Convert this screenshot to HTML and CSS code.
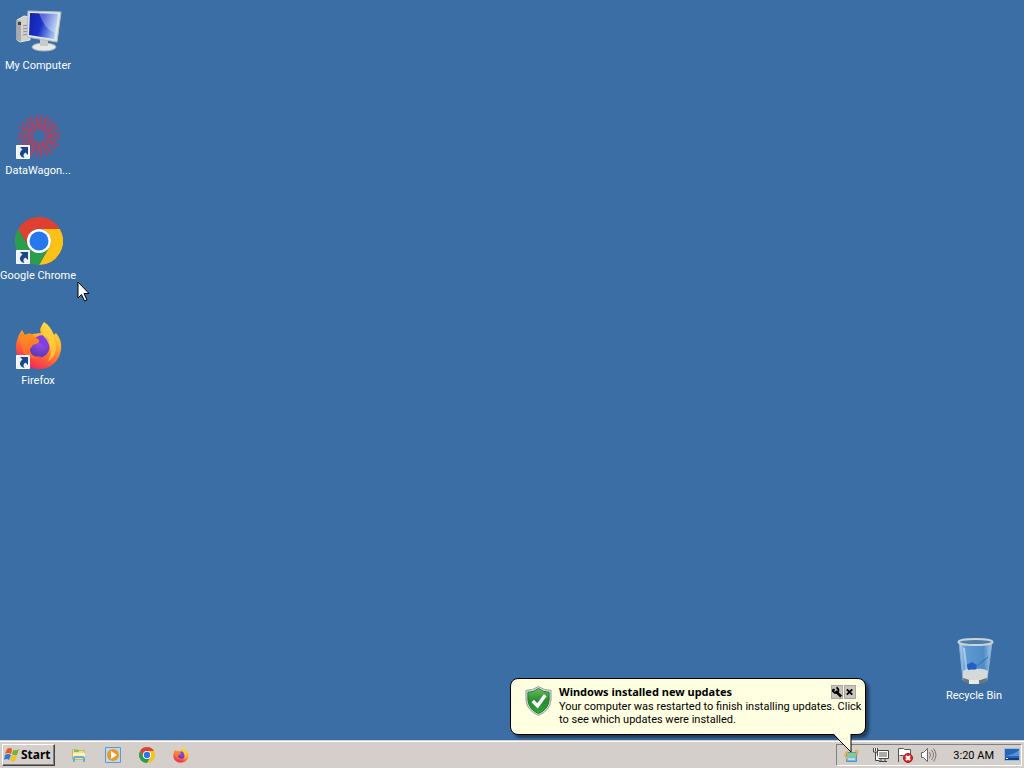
FILE: index.html
```html
<!DOCTYPE html>
<html lang="en">
<head>
<meta charset="utf-8">
<title>Desktop</title>
<link rel="stylesheet" href="styles.css">
</head>
<body>
<svg class="defs" aria-hidden="true">
  <defs>
    <linearGradient id="screen" x1="0" y1="0" x2="1" y2="0.3"><stop offset="0" stop-color="#1020a8"/><stop offset=".5" stop-color="#1a30c8"/><stop offset="1" stop-color="#9fc0f0"/></linearGradient>
    <linearGradient id="orange" x1=".8" y1="0" x2=".3" y2="1"><stop offset="0" stop-color="#ffe94a"/><stop offset=".35" stop-color="#ffb02c"/><stop offset=".65" stop-color="#ff6a35"/><stop offset="1" stop-color="#f02060"/></linearGradient>
    <linearGradient id="ear" x1="0" y1="0" x2="0" y2="1"><stop offset="0" stop-color="#ff9a1f"/><stop offset="1" stop-color="#ff6030"/></linearGradient>
    <radialGradient id="globe" cx=".6" cy=".25" r=".8"><stop offset="0" stop-color="#a050f0"/><stop offset="1" stop-color="#5535b5"/></radialGradient>
    <linearGradient id="shieldGreen" x1="0" y1="0" x2="0" y2="1"><stop offset="0" stop-color="#6dbb62"/><stop offset=".5" stop-color="#238e2d"/><stop offset="1" stop-color="#35a43a"/></linearGradient>
    <linearGradient id="glass" x1="0" y1="0" x2="1" y2="0"><stop offset="0" stop-color="#b9d7ef"/><stop offset=".2" stop-color="#5f9bd2"/><stop offset=".75" stop-color="#4d8cc8"/><stop offset="1" stop-color="#a9cbe8"/></linearGradient>
    <symbol id="shortcut" viewBox="0 0 14 14"><path fill="#eaf3fc" stroke="#fff" d="M.5.5h13v13H.5z"/><path fill="#1b4587" d="M4 2h8v8L9.500 7.500C7 9 7 11 8.500 13 4 12 2 8 6.500 4.500z"/></symbol>
    <symbol id="chrome" viewBox="0 0 48 48">
      <path fill="#e0402f" d="M3.200 12A24 24 0 0 1 44.800 12H24A12 12 0 0 0 13.600 30z"/>
      <path fill="#fbc116" d="M44.800 12A24 24 0 0 1 24 48L34.400 30A12 12 0 0 0 24 12z"/>
      <path fill="#2b9e4b" d="M24 48A24 24 0 0 1 3.200 12L13.600 30A12 12 0 0 0 34.400 30z"/>
      <circle cx="24" cy="24" r="12" fill="#fff"/><circle cx="24" cy="24" r="9.500" fill="#2878ed"/>
    </symbol>
    <symbol id="firefox" viewBox="0 0 48 48">
      <path fill="url(#orange)" d="M29 0C34 3 37 8 39 13L41 11C45 16 47 21 46 28 44 40 35 47 24 47 11 47 1 38 1 26 1 19 3 15 5 11L7 8 9 13 26 11C24 8 26 4 29 0z"/>
      <circle cx="24" cy="25" r="10.500" fill="url(#globe)"/>
      <path fill="#813ee0" d="M21 17C23 12 30 12 34 18L33 25 27 23z"/>
      <path fill="url(#ear)" d="M7 8L10 13C14 11 17 11 19 14L24 18C25 21 21 22 18 23L15 27C15 33 20 36 26 34 22 39 11 36 8 29 5 22 5 15 7 8z"/>
      <path fill="#ffd23f" opacity=".75" d="M29 1C36 9 42 17 41 27 40 33 37 37 33 39 38 31 36 25 31 17 27 14 26 6 29 1z"/>
    </symbol>
    <g id="ray" fill="none" stroke="#b5405f" stroke-width="1.200"><path d="M24 18V11L21 8 23 5 21 2M24 11L27 8 25 5 28 3M21 15L17 12M27 15L29 11M22 18L26 14 23 11M20 6l4 3"/></g>
  </defs>
</svg>

<main class="desktop">
  <nav class="shortcuts" aria-label="Desktop icons">
    <a class="shortcut" href="#">
      <svg viewBox="0 0 48 48" aria-hidden="true">
        <path fill="#d3d3cf" stroke="#e5e5df" d="M2 13L9 9 15 10V33L5 35 2 33z"/><path fill="#a9aba8" d="M2 13l4 1v21l-4-2z"/><path fill="#444" d="M3 15h3v3H3z"/><path stroke="#888" d="M8 19l5-1M8 22l5-1M8 25l5-1M8 28l5-1"/>
        <ellipse cx="29" cy="40" rx="12" ry="4" fill="#e6e9e8" stroke="#a9b3b5"/><path fill="#c4cccd" d="M25 31h8v8h-8z"/>
        <path fill="#dfe4e6" stroke="#b3bdc6" d="M13 4L46 5 42 35 12 30z"/><path fill="url(#screen)" d="M15 6L43 7 39 32 14 28z"/><path fill="#fff" opacity=".3" d="M24 6L43 7 40 26Q29 22 24 6z"/>
      </svg><span>My Computer</span>
    </a>
    <a class="shortcut" href="#">
      <svg viewBox="0 0 48 48" aria-hidden="true">
        <use href="#ray"/><use href="#ray" transform="rotate(30 24 24)"/><use href="#ray" transform="rotate(60 24 24)"/><use href="#ray" transform="rotate(90 24 24)"/><use href="#ray" transform="rotate(120 24 24)"/><use href="#ray" transform="rotate(150 24 24)"/><use href="#ray" transform="rotate(180 24 24)"/><use href="#ray" transform="rotate(210 24 24)"/><use href="#ray" transform="rotate(240 24 24)"/><use href="#ray" transform="rotate(270 24 24)"/><use href="#ray" transform="rotate(300 24 24)"/><use href="#ray" transform="rotate(330 24 24)"/>
        <use href="#shortcut" x="1" y="33" width="14" height="14"/>
      </svg><span>DataWagon...</span>
    </a>
    <a class="shortcut" href="#">
      <svg viewBox="0 0 48 48" aria-hidden="true"><use href="#chrome" width="48" height="48"/><use href="#shortcut" x="1" y="33" width="14" height="14"/></svg><span>Google Chrome</span>
    </a>
    <a class="shortcut" href="#">
      <svg viewBox="0 0 48 48" aria-hidden="true"><use href="#firefox" width="48" height="48"/><use href="#shortcut" x="1" y="33" width="14" height="14"/></svg><span>Firefox</span>
    </a>
  </nav>
  <a class="shortcut recycle" href="#">
    <svg viewBox="0 0 48 48" aria-hidden="true">
      <path fill="url(#glass)" stroke="#87afd1" d="M8 5L12 43Q25 49 36 43L41 5z"/>
      <path fill="#d5d9d8" d="M12 34Q18 29 23 33 30 30 37 34L36 41Q24 46 12 41z"/><path fill="#68777c" d="M12 41Q24 46 36 41L35 45Q24 50 13 45z"/><path fill="#e7ece8" d="M18 43h10v4H18z"/>
      <path fill="#245fc4" d="M15 28l6-3 5 3-1 4-8 1z"/><path fill="none" stroke="#2d6daf" stroke-width="1" d="M27 28l10-8"/><path stroke="#c1dcf2" stroke-width="2" opacity=".7" d="M13 11l3 26"/>
      <ellipse cx="24.500" cy="5" rx="17" ry="3" fill="#527da4" stroke="#cbd4da" stroke-width="2"/>
    </svg><span>Recycle Bin</span>
  </a>
  <svg class="pointer" viewBox="0 0 13 21" aria-hidden="true"><path fill="#fff" stroke="#000" d="M1 1V17L4.500 13.500 7.500 20 10 19 7 12.500H12z"/></svg>
</main>

<section class="balloon" role="status">
  <svg class="shield" viewBox="0 0 28 32" aria-hidden="true"><path fill="#d4ddd6" stroke="#8aa092" d="M14 1Q20 5 27 5V15Q26 26 14 31 2 26 1 15V5Q8 5 14 1z"/><path fill="url(#shieldGreen)" stroke="#25752d" d="M14 3Q19 7 25 7V15Q24 25 14 29 4 25 3 15V7Q9 7 14 3z"/><path fill="none" stroke="#fff" stroke-width="3.500" d="M8 16l5 5 8-11"/></svg>
  <div class="message">
    <header><h1>Windows installed new updates</h1>
      <div class="tools">
        <button type="button" aria-label="Options"><svg viewBox="0 0 11 12"><path fill="none" stroke="#000" stroke-width="3" d="M4 5l6 6"/><path fill="none" stroke="#000" stroke-width="2" d="M1 3v2l2 2h2l2-2V3L5 1M1 3l2 1"/></svg></button>
        <button type="button" aria-label="Close"><svg viewBox="0 0 11 12"><path stroke="#000" stroke-width="2" d="M2 3l6 6M8 3L2 9"/></svg></button>
      </div>
    </header>
    <p>Your computer was restarted to finish installing updates. Click to see which updates were installed.</p>
  </div>
  <svg class="tail" viewBox="0 0 22 20" aria-hidden="true"><path fill="#ffffe1" d="M0 0L18 19V0z"/><path fill="none" stroke="#000" d="M0 1L18 19V1"/></svg>
</section>

<footer class="taskbar">
  <button class="start" type="button">
    <svg viewBox="0 0 16 16" aria-hidden="true"><path fill="#e85824" d="M3 2Q6 0 8 2L7 7Q4 5 1 7z"/><path fill="#75b52d" d="M9 3Q12 4 15 2L13 8Q10 9 8 7z"/><path fill="#3978c8" d="M1 8Q4 6 7 8L5 13Q3 11 0 13z"/><path fill="#f5be25" d="M8 8Q10 10 13 9L11 14Q8 16 6 13z"/></svg>Start
  </button>
  <nav class="launch" aria-label="Quick launch">
    <a href="#" aria-label="Windows Explorer"><svg viewBox="0 0 16 16"><path fill="#f2df91" stroke="#c8b968" d="M1.500 2.500h5l1 1h6v9h-12z"/><path fill="#82bf67" d="M3 3h5v2H3z"/><path fill="#fbf1ba" d="M2 6h12v5H2z"/><path fill="none" stroke="#5eb1da" stroke-width="2" d="M3 15v-4q0-1 2-1h6q2 0 2 1v4"/></svg></a>
    <a href="#" aria-label="Media Player"><svg viewBox="0 0 16 16"><path fill="#b9daf0" stroke="#5c9bce" d="M.5.5h15v15H.5z"/><circle cx="8" cy="8" r="6" fill="#ef9624"/><path fill="#fff" d="M6 4l6 4-6 4z"/></svg></a>
    <a href="#" aria-label="Google Chrome"><svg viewBox="0 0 16 16"><use href="#chrome" width="16" height="16"/></svg></a>
    <a href="#" aria-label="Firefox"><svg viewBox="0 0 16 16"><use href="#firefox" width="16" height="16"/></svg></a>
  </nav>
  <div class="tray">
    <a href="#" aria-label="Windows Update"><svg viewBox="0 0 16 16"><path fill="#78b7e0" stroke="#4e96ca" d="M3.500 5.500h10v9h-10z"/><path fill="#8acb83" d="M4 6h9v4H4z"/><path fill="none" stroke="#efb050" stroke-width="2" d="M5 4Q0 7 4 12M12 4q4-2 2 4"/><path stroke="#fff" d="M5 12h7"/></svg></a>
    <a href="#" aria-label="Network"><svg viewBox="0 0 16 16"><path fill="#aaa" stroke="#444" d="M4.500 3.500h11v8h-11z"/><path fill="none" stroke="#fff" d="M5.500 4.500h9v6h-9z"/><path stroke="#444" fill="none" d="M8 12v2M12 12v2M6 14.500h8"/><path fill="#fff" stroke="#444" d="M.5 1v4h4V1M2.500 1v3M2.500 5v8.500h4"/></svg></a>
    <a href="#" aria-label="Action Center"><svg viewBox="0 0 16 16"><path fill="#fff" stroke="#555" d="M1.500 15V1.500h5l1 1h6v7h-6l-1-1h-4"/><circle cx="11" cy="11" r="4.500" fill="#d7292e" stroke="#a81820"/><path stroke="#fff" stroke-width="2" d="M9 9l4 4M13 9l-4 4"/></svg></a>
    <a href="#" aria-label="Volume"><svg viewBox="0 0 16 16"><path fill="#fff" stroke="#666" d="M.5 5.500h2l4-4v13l-4-4h-2z"/><path fill="none" stroke="#777" d="M8.500 5q2 3 0 6M10.500 3q4 5 0 10M12.500 1.500q5 6.500 0 13"/></svg></a>
    <time>3:20 AM</time>
    <button class="show" type="button" aria-label="Show desktop"><svg viewBox="0 0 16 14"><path fill="#2864b5" stroke="#9dbbe0" d="M.5.5h15v12H.5z"/><path fill="#5693d9" d="M1 8Q9 7 15 2V8z"/><path fill="#143e79" d="M1 10h14v2H1z"/><path fill="#fff" d="M2 10h2v1H2z"/></svg></button>
  </div>
</footer>
</body>
</html>
```
FILE: styles.css
```css
* { box-sizing: border-box; }
body {
  margin: 0;
  min-height: 100vh;
  display: flex;
  flex-direction: column;
  position: relative;
  overflow: hidden;
  background: #3a6ea5;
  color: #000;
  font: 11px/13px Roboto, "Noto Sans", sans-serif;
}
svg { display: block; }
.defs { position: absolute; width: 0; height: 0; }
a { color: inherit; text-decoration: none; }
button { margin: 0; padding: 0; border: 0; font: inherit; color: inherit; }

.desktop {
  flex: 1;
  display: flex;
  justify-content: space-between;
  align-items: flex-end;
}
.shortcuts { align-self: flex-start; padding-top: 7px; }
.shortcut {
  width: 76px;
  height: 105px;
  display: flex;
  flex-direction: column;
  align-items: center;
  gap: 4px;
  color: #fff;
  white-space: nowrap;
}
.shortcut svg { width: 48px; height: 48px; margin-left: 2px; }
.recycle { height: auto; margin: 0 12px 38px 0; }
.pointer { position: absolute; left: 77px; top: 281px; width: 13px; height: 21px; }

.balloon {
  position: absolute;
  right: 158px;
  bottom: 33px;
  width: 356px;
  display: flex;
  gap: 7px;
  padding: 6px 3px 8px 14px;
  border: 1px solid #000;
  border-radius: 8px;
  background: #ffffe1;
  box-shadow: 3px 3px 3px rgba(0, 0, 0, .45);
}
.shield { width: 27px; height: 32px; flex: none; }
.message { flex: 1; min-width: 0; }
.message header { display: flex; justify-content: space-between; padding: 0 6px 1px 0; }
.message h1 { margin: 0; font: bold 11px/14px "Noto Sans", sans-serif; }
.message p { margin: 0; }
.tools { display: flex; gap: 1px; }
.tools button {
  width: 12px;
  height: 14px;
  background: #c9c5bd;
  border: 1px solid #aaa69f;
}
.tools svg { width: 10px; height: 12px; }
.tail { position: absolute; right: 10px; top: 100%; width: 22px; height: 20px; margin-top: -1px; }

.taskbar {
  height: 28px;
  display: flex;
  align-items: center;
  padding: 1px 2px 0;
  background: #d4cfca;
  border-top: 1px solid #d4cfca;
  box-shadow: inset 0 1px #fff;
}
.start {
  width: 53px;
  height: 22px;
  display: flex;
  align-items: center;
  gap: 1px;
  padding-left: 1px;
  background: #d4cfca;
  border: 1px solid;
  border-color: #fff #404040 #404040 #fff;
  box-shadow: inset -1px -1px #808080;
  font: bold 12px/16px "Noto Sans", sans-serif;
}
.start svg { width: 16px; height: 16px; }
.launch { display: flex; gap: 18px; margin-left: 16px; }
.launch svg, .tray a svg { width: 16px; height: 16px; }
.tray {
  height: 22px;
  display: flex;
  align-items: center;
  gap: 8px;
  margin-left: auto;
  padding: 0 1px 0 6px;
  border: 1px solid;
  border-color: #808080 #fff #fff #808080;
}
.tray a:first-child { margin-right: 6px; }
.tray time { margin: 0 2px 0 8px; white-space: nowrap; }
.show { background: none; }
.show svg { width: 16px; height: 14px; }
```
